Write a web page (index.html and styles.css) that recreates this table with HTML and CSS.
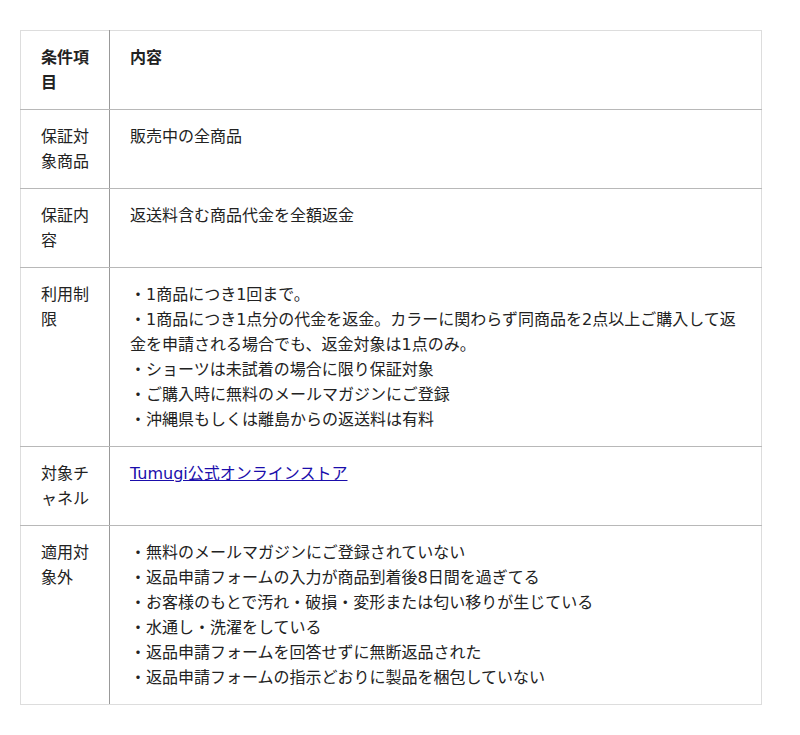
FILE: index.html
```html
<!DOCTYPE html>
<html lang="ja">
<head>
    <meta charset="UTF-8">
    <meta name="viewport" content="width=device-width, initial-scale=1.0">
    <title>返金保証の条件</title>
    <link rel="stylesheet" href="styles.css">
</head>
<body>
    <div class="page">
        <table class="terms">
            <tr>
                <th class="label">条件項目</th>
                <th>内容</th>
            </tr>
            <tr>
                <td class="label">保証対象商品</td>
                <td>販売中の全商品</td>
            </tr>
            <tr>
                <td class="label">保証内容</td>
                <td>返送料含む商品代金を全額返金</td>
            </tr>
            <tr>
                <td class="label">利用制限</td>
                <td>
                    ・1商品につき1回まで。<br>
                    ・1商品につき1点分の代金を返金。カラーに関わらず同商品を2点以上ご購入して返金を申請される場合でも、返金対象は1点のみ。<br>
                    ・ショーツは未試着の場合に限り保証対象<br>
                    ・ご購入時に無料のメールマガジンにご登録<br>
                    ・沖縄県もしくは離島からの返送料は有料
                </td>
            </tr>
            <tr>
                <td class="label">対象チ<br>ャネル</td>
                <td><a href="#">Tumugi公式オンラインストア</a></td>
            </tr>
            <tr>
                <td class="label">適用対象外</td>
                <td>
                    ・無料のメールマガジンにご登録されていない<br>
                    ・返品申請フォームの入力が商品到着後8日間を過ぎてる<br>
                    ・お客様のもとで汚れ・破損・変形または匂い移りが生じている<br>
                    ・水通し・洗濯をしている<br>
                    ・返品申請フォームを回答せずに無断返品された<br>
                    ・返品申請フォームの指示どおりに製品を梱包していない
                </td>
            </tr>
        </table>
    </div>
</body>
</html>
```

FILE: styles.css
```css
/* Basic Styles */
body {
    font-family: "DejaVu Sans", "Noto Sans CJK JP", sans-serif;
    margin: 0;
    padding: 0;
    background-color: #fff;
    color: #222;
}
.page {
    padding: 30px 20px;
}
.terms {
    width: 742px;
    border-collapse: collapse;
    border: 1px solid #ddd;
    font-size: 16px;
    line-height: 25px;
}
.terms th,
.terms td {
    padding: 14px 20px;
    text-align: left;
    vertical-align: top;
    border-bottom: 1px solid #b8b8b8;
}
.terms tr:last-child td {
    border-bottom: 1px solid #ddd;
}
.terms th {
    font-weight: bold;
}
.terms .label {
    width: 48px;
    border-right: 1px solid #999;
}
.terms a {
    color: #1a0dab;
}
```
